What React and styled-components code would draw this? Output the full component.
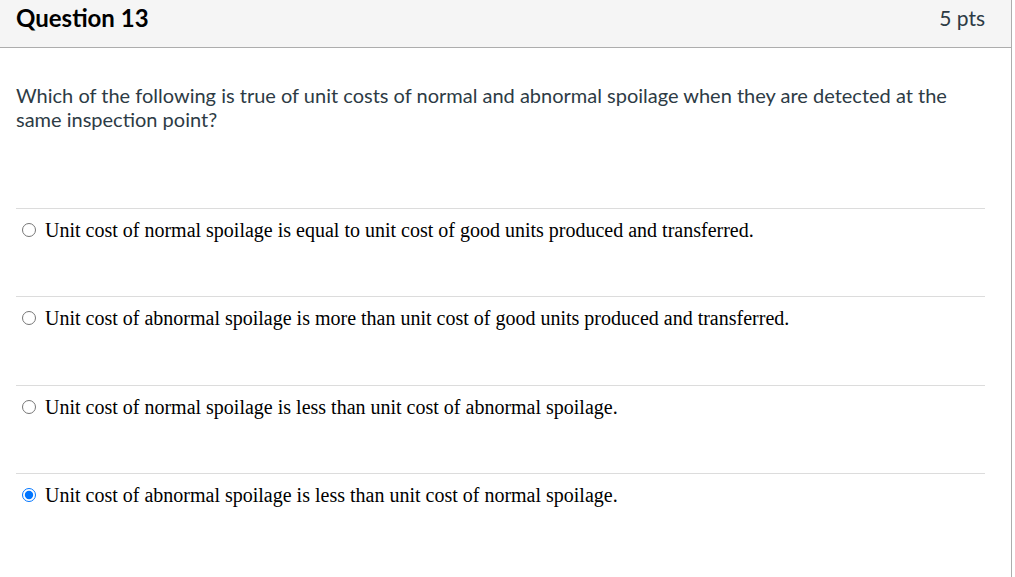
import React from "react";
import styled, { createGlobalStyle } from "styled-components";

const GlobalStyle = createGlobalStyle`
  html, body {
    margin: 0;
    padding: 0;
    background: #fff;
  }
`;

const Card = styled.div`
  width: 1011px;
  min-height: 577px;
  border-right: 1px solid #adadad;
  font-family: Lato, "Noto Sans", sans-serif;
  color: #2d3b45;
`;

const Header = styled.div`
  height: 47px;
  display: flex;
  align-items: center;
  justify-content: space-between;
  padding: 0 26px 0 16px;
  background-color: #f5f5f5;
  border-bottom: 1px solid #adadad;
`;

const Title = styled.h2`
  margin: 0;
  font-size: 24px;
  font-weight: 700;
  color: #000;
  line-height: 1;
  padding: 0 0 12px;
`;

const Points = styled.span`
  font-size: 21px;
  color: #2d3b45;
  line-height: 1;
  padding: 0 0 13px;
`;

const Body = styled.div`
  padding: 35px 26px 0 16px;
`;

const QuestionText = styled.p`
  margin: 0 0 77px;
  font-size: 20px;
  line-height: 24px;
  color: #2d3b45;
`;

const AnswerList = styled.div`
  display: flex;
  flex-direction: column;
`;

const AnswerRow = styled.label`
  display: flex;
  align-items: flex-start;
  gap: 9px;
  height: 88.4px;
  padding: 10px 0 0 6px;
  box-sizing: border-box;
  border-top: 1px solid #dcdcdc;
`;

const Radio = styled.input`
  width: 14px;
  height: 14px;
  margin: 4px 0 0 0;
  accent-color: #0075ff;
  flex: none;
`;

const AnswerText = styled.span`
  font-family: "Liberation Serif", "Times New Roman", serif;
  font-size: 20px;
  line-height: 22px;
  color: #000;
`;

const answers = [
  {
    label:
      "Unit cost of normal spoilage is equal to unit cost of good units produced and transferred.",
    checked: false,
  },
  {
    label:
      "Unit cost of abnormal spoilage is more than unit cost of good units produced and transferred.",
    checked: false,
  },
  {
    label: "Unit cost of normal spoilage is less than unit cost of abnormal spoilage.",
    checked: false,
  },
  {
    label: "Unit cost of abnormal spoilage is less than unit cost of normal spoilage.",
    checked: true,
  },
];

export default function App() {
  return (
    <>
      <GlobalStyle />
      <Card>
        <Header>
          <Title>Question 13</Title>
          <Points>5 pts</Points>
        </Header>
        <Body>
          <QuestionText>
            Which of the following is true of unit costs of normal and abnormal
            spoilage when they are detected at the same inspection point?
          </QuestionText>
          <AnswerList>
            {answers.map((answer, i) => (
              <AnswerRow key={i}>
                <Radio
                  type="radio"
                  name="q13"
                  defaultChecked={answer.checked}
                />
                <AnswerText>{answer.label}</AnswerText>
              </AnswerRow>
            ))}
          </AnswerList>
        </Body>
      </Card>
    </>
  );
}
